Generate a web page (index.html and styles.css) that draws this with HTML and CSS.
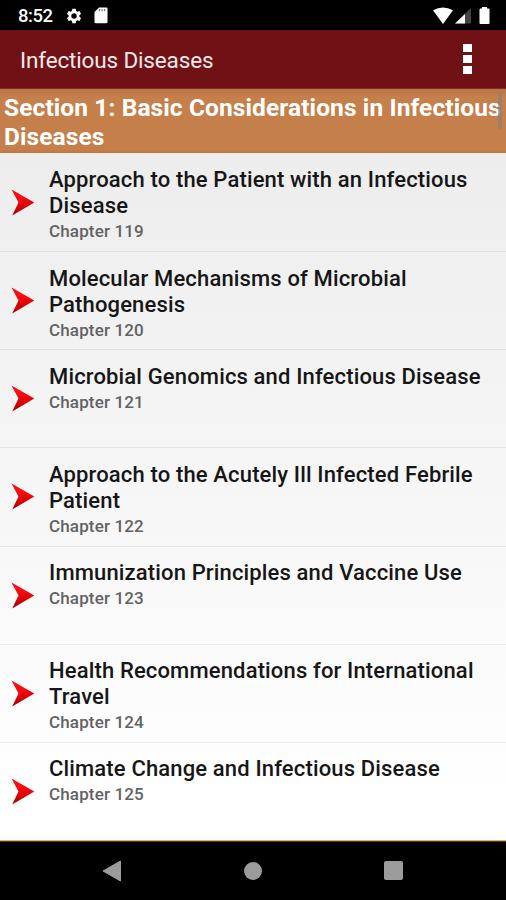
FILE: index.html
```html
<!DOCTYPE html>
<html lang="en">
<head>
    <meta charset="UTF-8">
    <meta name="viewport" content="width=device-width, initial-scale=1.0">
    <title>Infectious Diseases</title>
    <link rel="stylesheet" href="styles.css">
</head>
<body>
    <!-- Arrow shared by all rows -->
    <svg class="defs" width="0" height="0">
        <defs>
            <linearGradient id="red" x1="0" y1="0" x2="0" y2="1">
                <stop offset="0.3" stop-color="#fb0d10"/>
                <stop offset="0.6" stop-color="#e00208"/>
                <stop offset="1" stop-color="#a30208"/>
            </linearGradient>
            <symbol id="arrow" viewBox="0 0 24 28">
                <path d="M.5.5L23.300 13.500L1.200 26.500L7.500 13.500Z" fill="url(#red)"/>
            </symbol>
        </defs>
    </svg>

    <div class="screen">
        <!-- Status Bar -->
        <div class="status-bar">
            <span class="time">8:52</span>
            <svg class="gear" width="18" height="18" viewBox="0 0 24 24" fill="#fff">
                <path d="M19.140 12.940c.04-.3.06-.61.06-.94s-.02-.64-.07-.94l2.030-1.580a.49.49 0 0 0 .12-.61l-1.920-3.320a.49.49 0 0 0-.59-.22l-2.390.96a7 7 0 0 0-1.620-.94l-.36-2.540a.48.48 0 0 0-.48-.41h-3.840a.48.48 0 0 0-.47.41l-.36 2.540a7.300 7.300 0 0 0-1.620.94l-2.390-.96a.48.48 0 0 0-.59.22L2.740 8.870a.48.48 0 0 0 .12.61l2.030 1.580a6 6 0 0 0 0 1.880l-2.030 1.580a.49.49 0 0 0-.12.61l1.920 3.320c.12.22.37.29.59.22l2.390-.96c.5.38 1.030.7 1.620.94l.36 2.540c.05.24.24.41.48.41h3.840c.24 0 .44-.17.47-.41l.36-2.540a7 7 0 0 0 1.620-.94l2.390.96c.22.08.47 0 .59-.22l1.920-3.320a.48.48 0 0 0-.12-.61zM12 15.600a3.600 3.600 0 1 1 0-7.200 3.600 3.600 0 0 1 0 7.200z"/>
            </svg>
            <svg class="sd-card" width="14" height="17" viewBox="0 0 14 17">
                <path d="M5 .5H12.500Q13.500.5 13.500 1.500V15Q13.500 16.300 12.200 16.300H1.800Q.5 16.300.5 15V5Z" fill="#fff"/>
                <path d="M5.500 2v2.200M8 2v2.200M10.500 2v2.200" stroke="#777" stroke-width="1.200"/>
            </svg>
            <svg class="signals" width="58" height="18" viewBox="0 0 58 18">
                <path d="M0 3.300Q10 -2.300 20 3.300L10 17Z" fill="#fff"/>
                <path d="M38 1V16.500H22Z" fill="#444"/>
                <path d="M32 7V16.500H22Z" fill="#fff"/>
                <path d="M49 1.500V0h5v1.500h1.500q1 0 1 1V16q0 1-1 1h-8q-1 0-1-1V2.500q0-1 1-1Z" fill="#fff"/>
            </svg>
        </div>

        <!-- App Bar -->
        <div class="app-bar">
            <div class="title">Infectious Diseases</div>
            <div class="menu"><i></i><i></i><i></i></div>
        </div>

        <!-- Section Header -->
        <div class="section">
            Section 1: Basic Considerations in Infectious Diseases
            <div class="scrollbar"></div>
        </div>

        <!-- Chapter List -->
        <div class="list">
            <div class="row">
                <svg class="arrow"><use href="#arrow"/></svg>
                <div class="text">
                    <div class="name">Approach to the Patient with an Infectious Disease</div>
                    <div class="chapter">Chapter 119</div>
                </div>
            </div>
            <div class="row">
                <svg class="arrow"><use href="#arrow"/></svg>
                <div class="text">
                    <div class="name">Molecular Mechanisms of Microbial Pathogenesis</div>
                    <div class="chapter">Chapter 120</div>
                </div>
            </div>
            <div class="row">
                <svg class="arrow"><use href="#arrow"/></svg>
                <div class="text">
                    <div class="name">Microbial Genomics and Infectious Disease</div>
                    <div class="chapter">Chapter 121</div>
                </div>
            </div>
            <div class="row">
                <svg class="arrow"><use href="#arrow"/></svg>
                <div class="text">
                    <div class="name">Approach to the Acutely Ill Infected Febrile Patient</div>
                    <div class="chapter">Chapter 122</div>
                </div>
            </div>
            <div class="row">
                <svg class="arrow"><use href="#arrow"/></svg>
                <div class="text">
                    <div class="name">Immunization Principles and Vaccine Use</div>
                    <div class="chapter">Chapter 123</div>
                </div>
            </div>
            <div class="row">
                <svg class="arrow"><use href="#arrow"/></svg>
                <div class="text">
                    <div class="name">Health Recommendations for International Travel</div>
                    <div class="chapter">Chapter 124</div>
                </div>
            </div>
            <div class="row">
                <svg class="arrow"><use href="#arrow"/></svg>
                <div class="text">
                    <div class="name">Climate Change and Infectious Disease</div>
                    <div class="chapter">Chapter 125</div>
                </div>
            </div>
        </div>

        <!-- Navigation Bar -->
        <div class="nav-bar">
            <svg width="20" height="22" viewBox="0 0 20 22"><path d="M1 11L18.500 1V21Z" fill="#9b9b9b" stroke="#9b9b9b" stroke-linejoin="round"/></svg>
            <div class="home"></div>
            <div class="recent"></div>
        </div>
    </div>
</body>
</html>
```

FILE: styles.css
```css
* {
    margin: 0;
    padding: 0;
    box-sizing: border-box;
    font-family: Roboto, 'Liberation Sans', sans-serif;
}

body {
    background: #000;
    overflow: hidden;
}

.defs {
    position: absolute;
}

.screen {
    display: flex;
    flex-direction: column;
    width: 506px;
    height: 900px;
}

.status-bar {
    display: flex;
    align-items: center;
    height: 30px;
    padding: 1px 16px 0 18px;
    background: #000;
    color: #fff;
}

.time {
    width: 47px;
    font-size: 18.5px;
    font-weight: 500;
    letter-spacing: -0.5px;
}

.gear {
    margin-right: 11px;
}

.signals {
    margin-left: auto;
    margin-right: -1px;
}

.app-bar {
    display: flex;
    align-items: center;
    justify-content: space-between;
    height: 59px;
    padding: 1px 34px 0 20px;
    background: #6f1115;
    border-bottom: 1px solid #7c3020;
    color: #f5e9e9;
}

.title {
    font-size: 22.5px;
    letter-spacing: -0.15px;
}

.menu {
    display: flex;
    flex-direction: column;
    gap: 3px;
    margin-bottom: 2px;
}

.menu i {
    width: 9px;
    height: 8px;
    background: #fff;
}

.section {
    position: relative;
    height: 64px;
    padding: 5px 0 0 4px;
    background: linear-gradient(#b87645, #c47f4b 8px, #c47f4b 61px, #bd773c);
    color: #fff;
    font-size: 24.5px;
    font-weight: 700;
    line-height: 28.500px;
    letter-spacing: 0.1px;
}

.scrollbar {
    position: absolute;
    top: 4px;
    right: 4px;
    width: 4px;
    height: 36px;
    background: rgba(128, 128, 128, 0.6);
}

.list {
    height: 687px;
    padding-top: 1px;
    background: linear-gradient(#ededed, #fff 95%);
}

.row {
    display: flex;
    height: 98.150px;
    padding: 13px 0 0 11px;
    border-bottom: 1px solid rgba(0, 0, 0, 0.06);
}

.row:last-child {
    border-bottom: none;
}

.arrow {
    width: 24px;
    height: 28px;
    margin: 22px 14px 0 0;
}

.text {
    padding-top: 0.4px;
}

.name {
    width: 445px;
    color: #161616;
    font-size: 22px;
    font-weight: 500;
    line-height: 26px;
    letter-spacing: 0.150px;
}

.chapter {
    color: #626262;
    font-size: 17px;
    font-weight: 500;
    line-height: 24px;
    letter-spacing: 0.150px;
}

.nav-bar {
    display: flex;
    align-items: center;
    justify-content: space-between;
    height: 60px;
    padding: 0 103px 0 102px;
    border-top: 1px solid #d6b27a;
    box-shadow: inset 0 1px #5a3d14;
    background: #000;
}

.home {
    width: 18px;
    height: 18px;
    border-radius: 50%;
    background: #9b9b9b;
}

.recent {
    width: 19px;
    height: 19px;
    border-radius: 2px;
    background: #9b9b9b;
}
```
